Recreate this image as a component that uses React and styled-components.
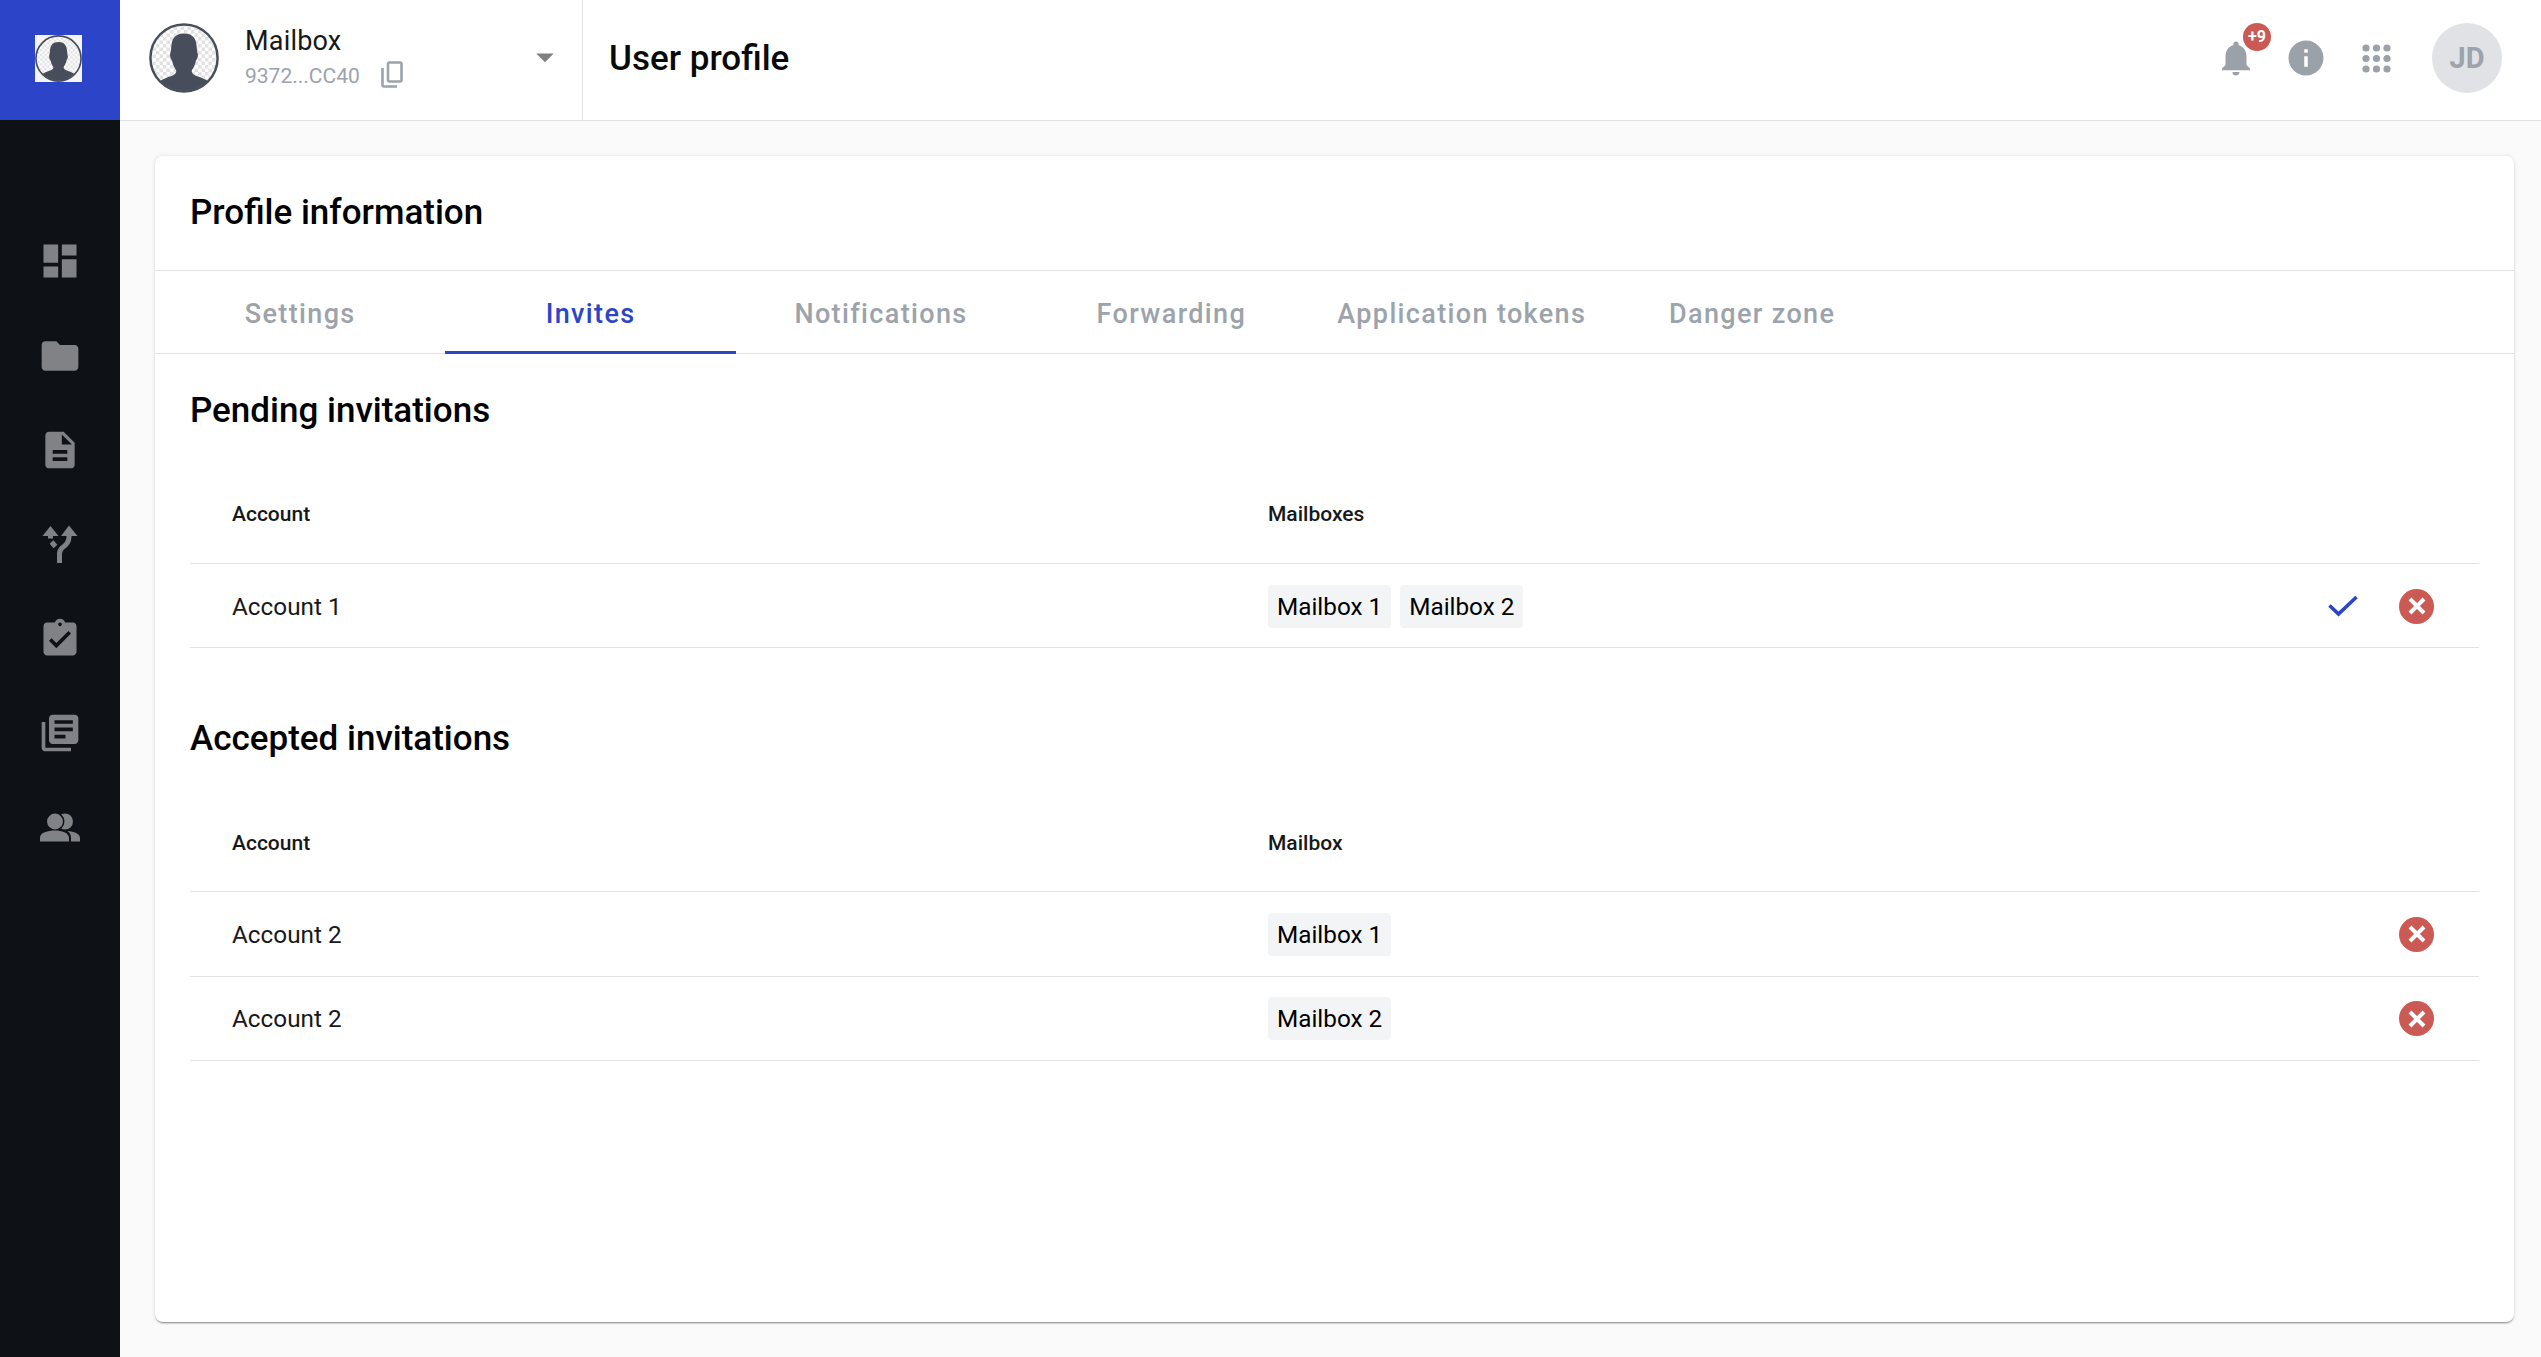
import React from "react";
import styled, { createGlobalStyle } from "styled-components";
import {
  MdDashboard, MdFolder, MdDescription, MdAssignmentTurnedIn, MdLibraryBooks,
  MdNotifications, MdInfo, MdArrowDropDown,
} from "react-icons/md";

const Global = createGlobalStyle`
  html, body { margin: 0; padding: 0; background: #fafafa; }
  * { box-sizing: border-box; }
  body { font-family: Roboto, "Liberation Sans", sans-serif; color: #000; }
`;

const Shell = styled.div`
  display: grid;
  grid-template-columns: 120px 1fr;
  width: 2541px;
  height: 1357px;
  overflow: hidden;
`;
const Rail = styled.nav`
  background: #0e1217;
  display: flex;
  flex-direction: column;
  align-items: center;
`;
const Brand = styled.div`
  width: 120px;
  height: 120px;
  padding: 0 3px 3px 0;
  background: #2c44c8;
  display: flex;
  align-items: center;
  justify-content: center;
  margin-bottom: 94px;
`;
const BrandTile = styled.div`
  width: 47px;
  height: 47px;
  background: #f4f4f4;
  display: flex;
  align-items: center;
  justify-content: center;
`;
const RailItem = styled.div`
  width: 120px;
  height: 94.4px;
  display: flex;
  align-items: center;
  justify-content: center;
  color: #808285;
  font-size: 44px;
`;
const Main = styled.div`
  display: flex;
  flex-direction: column;
  min-width: 0;
`;
const TopBar = styled.header`
  height: 121px;
  background: #fff;
  border-bottom: 1.5px solid #e2e2e2;
  display: flex;
  align-items: stretch;
`;
const MailboxPicker = styled.div`
  width: 463px;
  border-right: 1.5px solid #e2e2e2;
  display: flex;
  align-items: center;
  padding: 0 0 4px 29px;
  position: relative;
`;
const PickerText = styled.div`
  margin-left: 26px;
  display: flex;
  flex-direction: column;
`;
const PickerName = styled.div`
  font-size: 27px;
  line-height: 32px;
  letter-spacing: 0.2px;
  color: #17181a;
  margin-top: -2px;
`;
const PickerAddr = styled.div`
  display: flex;
  align-items: center;
  font-size: 21px;
  line-height: 28px;
  margin-top: 5px;
  color: #9ca3ab;
`;
const CopyGlyph = styled.svg`
  width: 22px;
  height: 27px;
  margin-left: 21px;
  margin-top: -3px;
`;
const Caret = styled.div`
  position: absolute;
  left: 404px;
  top: 36px;
  color: #808080;
  font-size: 42px;
  line-height: 0;
`;
const PageTitle = styled.h1`
  margin: 0 0 3px 26px;
  align-self: center;
  font-size: 35px;
  font-weight: 500;
  color: #0a0a0a;
  flex: 1;
`;
const TopActions = styled.div`
  display: flex;
  align-items: center;
  padding: 0 39px 4px 0;
`;
const ActionIcon = styled.div`
  width: 70px;
  display: flex;
  justify-content: center;
  color: #9aa1a9;
  font-size: 42px;
  line-height: 0;
  position: relative;
`;
const Badge = styled.span`
  position: absolute;
  left: 42px;
  top: -14px;
  width: 28px;
  height: 28px;
  border-radius: 50%;
  background: #cb5a54;
  color: #fff;
  font-size: 16px;
  font-weight: 700;
  line-height: 28px;
  text-align: center;
`;
const Initials = styled.div`
  width: 70px;
  height: 70px;
  border-radius: 50%;
  margin-left: 21px;
  background: #e0e2e6;
  color: #9ca3ab;
  font-size: 29px;
  font-weight: 700;
  display: flex;
  align-items: center;
  justify-content: center;
`;
const Content = styled.main`
  flex: 1;
  padding: 35px 27px 35px 35px;
  display: flex;
`;
const Card = styled.section`
  flex: 1;
  background: #fff;
  border-radius: 8px;
  box-shadow: 0 2px 2px -1px rgba(0, 0, 0, 0.45), 0 0 4px rgba(0, 0, 0, 0.12);
`;
const CardHead = styled.div`
  height: 115px;
  padding: 0 35px 2px;
  border-bottom: 1.5px solid #e2e2e2;
  display: flex;
  align-items: center;
`;
const CardTitle = styled.h2`
  margin: 0;
  font-size: 35px;
  font-weight: 500;
  color: #000;
`;
const Tabs = styled.div`
  display: flex;
  height: 83px;
  border-bottom: 1.5px solid #e2e2e2;
`;
const Tab = styled.div`
  width: 290.4px;
  height: 83px;
  display: flex;
  align-items: center;
  justify-content: center;
  padding-top: ${(p) => (p.$active ? 5 : 3)}px;
  font-size: 27px;
  font-weight: 500;
  letter-spacing: 1.35px;
  color: ${(p) => (p.$active ? "#2c44c8" : "#9ca3ab")};
  border-bottom: ${(p) => (p.$active ? "3px solid #2c44c8" : "none")};
`;
const Body = styled.div`
  padding: 0 35px;
`;
const SectionTitle = styled.h3`
  margin: 0;
  height: 110px;
  padding-top: 2px;
  display: flex;
  align-items: center;
  font-size: 35px;
  font-weight: 500;
  color: #000;
`;
const Table = styled.div`
  display: flex;
  flex-direction: column;
  margin-bottom: 34px;
`;
const HeaderRow = styled.div`
  display: grid;
  grid-template-columns: 1036px 1fr;
  height: 100px;
  padding: 1.5px 42px 0;
  align-items: center;
  border-bottom: 1.5px solid #e2e2e2;
  font-size: 21px;
  font-weight: 500;
  color: #17181a;
`;
const Row = styled.div`
  display: grid;
  grid-template-columns: 1036px 1fr auto;
  height: 84.3px;
  padding: 1px 45px 0 42px;
  align-items: center;
  border-bottom: 1.5px solid #e2e2e2;
  font-size: 24.3px;
  color: #17181a;
`;
const Chips = styled.div`
  display: flex;
  gap: 9px;
`;
const Chip = styled.span`
  height: 43px;
  padding: 0 9px;
  border-radius: 4px;
  background: #f3f4f6;
  color: #000;
  font-size: 24.3px;
  line-height: 43px;
`;
const RowActions = styled.div`
  display: flex;
  align-items: center;
  gap: 41px;
`;
const Reject = styled.div`
  width: 35px;
  height: 35px;
  border-radius: 50%;
  background: #cb5a54;
  display: flex;
  align-items: center;
  justify-content: center;
`;

function Silhouette({ id, size }) {
  return (
    <svg width={size} height={size} viewBox="0 0 100 100">
      <defs>
        <pattern id={id} width="10" height="10" patternUnits="userSpaceOnUse">
          <rect width="10" height="10" fill="#fff" />
          <rect width="5" height="5" fill="#e2e2e2" />
          <rect x="5" y="5" width="5" height="5" fill="#e2e2e2" />
        </pattern>
        <clipPath id={`${id}-clip`}>
          <circle cx="50" cy="50" r="47" />
        </clipPath>
      </defs>
      <circle cx="50" cy="50" r="48" fill={`url(#${id})`} stroke="#484d5b" strokeWidth="3.5" />
      <path
        clipPath={`url(#${id}-clip)`}
        fill="#484d5b"
        d="M50 15C38 15 33 22 32 32C31.5 38 31 42 30 45C30 50 32 52 33 54C34 60 37 65 39 68C39 71 38 73 34 75C26 78 16 81 10 88L10 100L90 100L90 88C84 81 74 78 66 75C62 73 61 71 61 68C63 65 66 60 67 54C68 52 70 50 70 45C69 42 68.5 38 68 32C67 22 62 15 50 15Z"
      />
    </svg>
  );
}

function ForkIcon() {
  return (
    <svg width="44" height="44" viewBox="0 0 44 44" fill="#808285">
      <path d="M4.5 14L12.5 4L20.5 14Z" />
      <path d="M23 14L31 3.5L39.5 14Z" />
      <path
        fill="none"
        stroke="#808285"
        strokeWidth="5"
        d="M31 12V15C31 20 27 24 24 26C22.5 27.5 21.5 29 21.5 32V41"
      />
      <path fill="none" stroke="#808285" strokeWidth="5" d="M12.5 12V16.5M13.5 20L17.5 24.5" />
    </svg>
  );
}

function PeopleIcon() {
  return (
    <svg width="44" height="44" viewBox="0 1.5 44 44" fill="#808285">
      <circle cx="27" cy="17" r="8" />
      <circle cx="17" cy="17" r="8.7" stroke="#0e1217" strokeWidth="1.5" />
      <path d="M2 37V33C2 28 10 26 17 26C24 26 30 28 31 33V37Z" />
      <path d="M33 37V33C33 30 31.5 28 29.5 26.5C36 27 42 29 42 33.5V37Z" />
    </svg>
  );
}

function GridDots() {
  const pts = [4, 14.5, 25];
  return (
    <svg width="29" height="29" viewBox="0 0 29 29" fill="#9aa1a9">
      {pts.map((y) => pts.map((x) => <circle key={`${x}-${y}`} cx={x} cy={y} r="3.6" />))}
    </svg>
  );
}

function CopyIcon() {
  return (
    <CopyGlyph viewBox="0 0 22 27" fill="none" stroke="#9ca3ab" strokeWidth="2.6">
      <rect x="7" y="1.5" width="13.5" height="19" rx="1.5" />
      <path d="M1.5 7V24C1.5 25 2 25.5 3 25.5H16" />
    </CopyGlyph>
  );
}

function CheckIcon() {
  return (
    <svg width="30" height="22" viewBox="0 0 30 22" fill="none" stroke="#2c44c8" strokeWidth="3.6">
      <path d="M1.5 10.5L10.5 19L28.5 2" />
    </svg>
  );
}

const railIcons = [MdDashboard, MdFolder, MdDescription, ForkIcon, MdAssignmentTurnedIn, MdLibraryBooks, PeopleIcon];
const tabs = ["Settings", "Invites", "Notifications", "Forwarding", "Application tokens", "Danger zone"];

function RejectButton() {
  return (
    <Reject>
      <svg width="18" height="18" viewBox="0 0 18 18" fill="none" stroke="#fff" strokeWidth="4">
        <path d="M2 2L16 16M16 2L2 16" />
      </svg>
    </Reject>
  );
}

export default function App() {
  return (
    <>
      <Global />
      <Shell>
        <Rail>
          <Brand>
            <BrandTile>
              <Silhouette id="brand-check" size={47} />
            </BrandTile>
          </Brand>
          {railIcons.map((Icon, i) => (
            <RailItem key={i}>
              <Icon />
            </RailItem>
          ))}
        </Rail>
        <Main>
          <TopBar>
            <MailboxPicker>
              <Silhouette id="picker-check" size={70} />
              <PickerText>
                <PickerName>Mailbox</PickerName>
                <PickerAddr>
                  9372...CC40
                  <CopyIcon />
                </PickerAddr>
              </PickerText>
              <Caret>
                <MdArrowDropDown />
              </Caret>
            </MailboxPicker>
            <PageTitle>User profile</PageTitle>
            <TopActions>
              <ActionIcon>
                <MdNotifications />
                <Badge>+9</Badge>
              </ActionIcon>
              <ActionIcon>
                <MdInfo />
              </ActionIcon>
              <ActionIcon>
                <GridDots />
              </ActionIcon>
              <Initials>JD</Initials>
            </TopActions>
          </TopBar>
          <Content>
            <Card>
              <CardHead>
                <CardTitle>Profile information</CardTitle>
              </CardHead>
              <Tabs>
                {tabs.map((t) => (
                  <Tab key={t} $active={t === "Invites"}>
                    {t}
                  </Tab>
                ))}
              </Tabs>
              <Body>
                <SectionTitle>Pending invitations</SectionTitle>
                <Table>
                  <HeaderRow>
                    <span>Account</span>
                    <span>Mailboxes</span>
                  </HeaderRow>
                  <Row>
                    <span>Account 1</span>
                    <Chips>
                      <Chip>Mailbox 1</Chip>
                      <Chip>Mailbox 2</Chip>
                    </Chips>
                    <RowActions>
                      <CheckIcon />
                      <RejectButton />
                    </RowActions>
                  </Row>
                </Table>
                <SectionTitle>Accepted invitations</SectionTitle>
                <Table>
                  <HeaderRow>
                    <span>Account</span>
                    <span>Mailbox</span>
                  </HeaderRow>
                  <Row>
                    <span>Account 2</span>
                    <Chips>
                      <Chip>Mailbox 1</Chip>
                    </Chips>
                    <RejectButton />
                  </Row>
                  <Row>
                    <span>Account 2</span>
                    <Chips>
                      <Chip>Mailbox 2</Chip>
                    </Chips>
                    <RejectButton />
                  </Row>
                </Table>
              </Body>
            </Card>
          </Content>
        </Main>
      </Shell>
    </>
  );
}
